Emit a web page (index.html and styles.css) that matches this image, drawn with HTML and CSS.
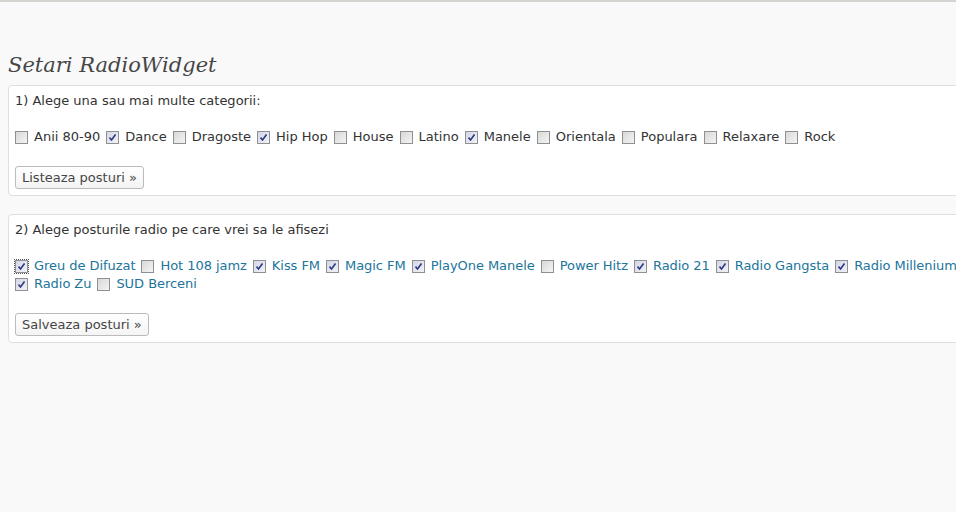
FILE: index.html
```html
<!DOCTYPE html>
<html lang="ro">
<head>
<meta charset="utf-8">
<title>Setari RadioWidget</title>
<link rel="stylesheet" href="styles.css">
</head>
<body>
<div class="wrap">
  <h2 class="title">Setari RadioWidget</h2>
  <form class="box">
    <p class="lead">1) Alege una sau mai multe categorii:</p>
    <div class="opts">
      <label class="opt"><input type="checkbox"><span>Anii 80-90</span></label>
      <label class="opt"><input type="checkbox" checked><span>Dance</span></label>
      <label class="opt"><input type="checkbox"><span>Dragoste</span></label>
      <label class="opt"><input type="checkbox" checked><span>Hip Hop</span></label>
      <label class="opt"><input type="checkbox"><span>House</span></label>
      <label class="opt"><input type="checkbox"><span>Latino</span></label>
      <label class="opt"><input type="checkbox" checked><span>Manele</span></label>
      <label class="opt"><input type="checkbox"><span>Orientala</span></label>
      <label class="opt"><input type="checkbox"><span>Populara</span></label>
      <label class="opt"><input type="checkbox"><span>Relaxare</span></label>
      <label class="opt"><input type="checkbox"><span>Rock</span></label>
    </div>
    <button type="button" class="btn">Listeaza posturi »</button>
  </form>
  <form class="box">
    <p class="lead">2) Alege posturile radio pe care vrei sa le afisezi</p>
    <div class="opts links">
      <label class="opt"><input type="checkbox" class="focus" checked><a href="#">Greu de Difuzat</a></label>
      <label class="opt"><input type="checkbox"><a href="#">Hot 108 jamz</a></label>
      <label class="opt"><input type="checkbox" checked><a href="#">Kiss FM</a></label>
      <label class="opt"><input type="checkbox" checked><a href="#">Magic FM</a></label>
      <label class="opt"><input type="checkbox" checked><a href="#">PlayOne Manele</a></label>
      <label class="opt"><input type="checkbox"><a href="#">Power Hitz</a></label>
      <label class="opt"><input type="checkbox" checked><a href="#">Radio 21</a></label>
      <label class="opt"><input type="checkbox" checked><a href="#">Radio Gangsta</a></label>
      <label class="opt"><input type="checkbox" checked><a href="#">Radio Millenium</a></label>
      <label class="opt"><input type="checkbox" checked><a href="#">Radio Zu</a></label>
      <label class="opt"><input type="checkbox"><a href="#">SUD Berceni</a></label>
    </div>
    <button type="button" class="btn">Salveaza posturi »</button>
  </form>
</div>
</body>
</html>
```
FILE: styles.css
```css
html, body {
  margin: 0;
  padding: 0;
}
body {
  background: #f9f9f9;
  border-top: 2px solid #d4d4d0;
  font-family: "DejaVu Sans", Verdana, sans-serif;
  font-size: 13px;
  line-height: 18px;
  color: #333;
  overflow: hidden;
  height: 510px;
}
.wrap {
  padding: 0 0 0 8px;
  width: 1000px;
}
.title {
  margin: 0;
  padding: 48px 0 0 0;
  height: 35px;
  font-family: "DejaVu Serif", Georgia, serif;
  font-style: italic;
  font-weight: normal;
  font-size: 21px;
  line-height: 30px;
  color: #464646;
}
.box {
  display: block;
  background: #fff;
  border: 1px solid #dfdfdf;
  border-radius: 4px;
  padding: 6px 6px 6px 6px;
  margin: 0 0 18px 0;
}
.lead {
  margin: 0 0 18px 0;
}
.opts {
  display: flex;
  flex-wrap: wrap;
  width: 960px;
  margin-bottom: 20px;
}
.opt {
  display: flex;
  align-items: center;
  margin-right: 6px;
  height: 18px;
}
.links .opt a {
  letter-spacing: -0.05px;
}
.opt input {
  appearance: none;
  -webkit-appearance: none;
  width: 13px;
  height: 13px;
  margin: 0 6px 0 0;
  border: 1px solid #8d9196;
  background: linear-gradient(135deg, #d8d8d6 0%, #f4f4f2 100%);
  box-sizing: border-box;
  position: relative;
}
.opt input:checked {
  background: linear-gradient(135deg, #d4d6e4 0%, #f2f2f6 100%);
}
.opt input:checked::after {
  content: "";
  position: absolute;
  left: 2px;
  top: 2px;
  width: 7px;
  height: 7px;
  background: url("data:image/svg+xml;utf8,<svg xmlns='http://www.w3.org/2000/svg' width='7' height='7' viewBox='0 0 7 7'><path d='M0.5 3.5 L2.5 6 L6.5 0.5' fill='none' stroke='%232d3a86' stroke-width='1.6'/></svg>") no-repeat;
}
.opt input.focus {
  outline: 1px dotted #555;
  outline-offset: 0;
}
.links a {
  color: #21759b;
  text-decoration: none;
}
.btn {
  display: block;
  height: 23px;
  padding: 0 6px;
  font-family: "DejaVu Sans", Verdana, sans-serif;
  font-size: 13px;
  color: #464646;
  background: linear-gradient(#fff, #f4f4f4);
  border: 1px solid #bbb;
  border-radius: 3px;
  line-height: 18px;
}
```
